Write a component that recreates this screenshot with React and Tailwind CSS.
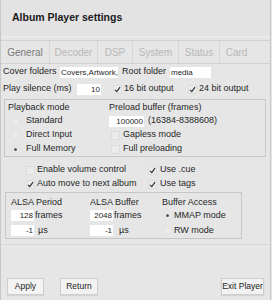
import React from "react";

const Check = ({ checked }) => (
  <span className="w-[9px] h-[9px] shrink-0 border border-[#dddddd] bg-[#ebebeb] flex items-center justify-center">
    {checked && (
      <svg width="7" height="7" viewBox="0 0 7 7">
        <path d="M1 3.8 L2.8 5.6 L6 1.2" fill="none" stroke="#333" strokeWidth="1.2" />
      </svg>
    )}
  </span>
);

const Radio = ({ checked }) => (
  <span className="w-[9px] h-[9px] shrink-0 rounded-full border border-[#e0e0e0] bg-[#ebebeb] flex items-center justify-center">
    {checked && <span className="w-[3px] h-[3px] rounded-full bg-[#555]" />}
  </span>
);

const Field = ({ w, value, right }) => (
  <span
    className={`h-[11px] bg-white text-[8px] leading-[11px] px-[1px] overflow-hidden whitespace-nowrap ${
      right ? "text-right" : "text-left"
    }`}
    style={{ width: w }}
  >
    {value}
  </span>
);

const tabs = [
  { name: "General", w: "w-[49px]", active: true },
  { name: "Decoder", w: "w-[48px]" },
  { name: "DSP", w: "w-[35px]" },
  { name: "System", w: "w-[46px]" },
  { name: "Status", w: "w-[41px]" },
  { name: "Card", w: "w-[33px]" },
];

const Button = ({ children, className }) => (
  <button
    className={`h-[17px] bg-[#f3f3f3] border border-[#cfcfcf] shadow-[0_1px_1px_rgba(0,0,0,0.08)] text-[8.5px] text-[#222] ${className}`}
  >
    {children}
  </button>
);

export default function App() {
  return (
    <div
      className="w-[272px] h-[300px] bg-[#e6e6e6] text-[#262626] text-[9px] overflow-hidden"
      style={{ fontFamily: '"Liberation Sans", Arial, sans-serif' }}
    >
      <div className="w-[271px] h-[300px] border-x border-[#c8c8c8] flex flex-col">
        {/* header */}
        <div className="h-[37px] shrink-0 flex items-center pl-[11px] border-b border-[#ededed] bg-[#e3e3e3]">
          <span className="font-bold text-[10.5px] text-[#1a1a1a]">Album Player settings</span>
        </div>

        {/* tabs */}
        <div className="mt-[3px] h-[24px] shrink-0 flex border-y border-[#d2d2d2]">
          {tabs.map((t, i) => (
            <div
              key={t.name}
              className={`${t.w} flex items-center justify-center text-[10px] ${
                i < tabs.length - 1 ? "border-r border-[#d6d6d6]" : ""
              } ${t.active ? "text-[#7a7a7a]" : "text-[#b8b8b8]"}`}
            >
              {t.name}
            </div>
          ))}
        </div>

        {/* content */}
        <div className="pl-[2px] flex flex-col">
          <div className="h-[16px] flex items-center">
            <span className="w-[57px]">Cover folders</span>
            <Field w="58px" value="Covers,Artwork," />
            <span className="ml-[4px] w-[48px]">Root folder</span>
            <Field w="41px" value="media" />
          </div>

          <div className="mt-[1px] h-[16px] flex items-center">
            <span className="w-[74px]">Play silence (ms)</span>
            <Field w="24px" value="10" right />
            <span className="ml-[12px]">
              <Check checked />
            </span>
            <span className="ml-[2px] w-[64px]">16 bit output</span>
            <Check checked />
            <span className="ml-[2px]">24 bit output</span>
          </div>

          {/* playback box */}
          <div className="mt-[2px] ml-[1px] w-[262px] border border-[#c6c6c6] flex pt-[2px] h-[58px]">
            <div className="w-[104px] pl-[3px] flex flex-col">
              <div className="h-[12px] flex items-center">Playback mode</div>
              {[
                ["Standard", false],
                ["Direct Input", false],
                ["Full Memory", true],
              ].map(([label, on]) => (
                <div key={label} className="h-[14px] flex items-center">
                  <span className="ml-[3px]">
                    <Radio checked={on} />
                  </span>
                  <span className="ml-[6px]">{label}</span>
                </div>
              ))}
            </div>
            <div className="flex flex-col">
              <div className="h-[12px] flex items-center">Preload buffer (frames)</div>
              <div className="h-[14px] flex items-center">
                <Field w="35px" value="100000" right />
                <span className="ml-[4px]">(16384-8388608)</span>
              </div>
              {["Gapless mode", "Full preloading"].map((label) => (
                <div key={label} className="h-[14px] flex items-center">
                  <span className="ml-[2px]">
                    <Check />
                  </span>
                  <span className="ml-[3px]">{label}</span>
                </div>
              ))}
            </div>
          </div>

          {/* options */}
          <div className="mt-[6px] flex">
            <div className="w-[145px] pl-[23px] flex flex-col">
              <div className="h-[14px] flex items-center gap-[2px]">
                <Check />
                <span>Enable volume control</span>
              </div>
              <div className="h-[14px] flex items-center gap-[2px]">
                <Check checked />
                <span>Auto move to next album</span>
              </div>
            </div>
            <div className="flex flex-col">
              <div className="h-[14px] flex items-center gap-[3px]">
                <Check checked />
                <span>Use .cue</span>
              </div>
              <div className="h-[14px] flex items-center gap-[3px]">
                <Check checked />
                <span>Use tags</span>
              </div>
            </div>
          </div>

          {/* ALSA box */}
          <div className="mt-[1px] ml-[2px] w-[237px] h-[47px] border border-[#c6c6c6] pt-[5px] pl-[5px] flex">
            <div className="w-[79px] flex flex-col">
              <div className="h-[10px] flex items-center">ALSA Period</div>
              <div className="h-[15px] flex items-center">
                <Field w="23px" value="128" right />
                <span className="ml-[1px]">frames</span>
              </div>
              <div className="h-[15px] flex items-center">
                <Field w="23px" value="-1" right />
                <span className="ml-[4px]">µs</span>
              </div>
            </div>
            <div className="w-[72px] flex flex-col">
              <div className="h-[10px] flex items-center">ALSA Buffer</div>
              <div className="h-[15px] flex items-center">
                <Field w="23px" value="2048" right />
                <span className="ml-[1px]">frames</span>
              </div>
              <div className="h-[15px] flex items-center">
                <Field w="23px" value="-1" right />
                <span className="ml-[6px]">µs</span>
              </div>
            </div>
            <div className="flex flex-col">
              <div className="h-[10px] flex items-center">Buffer Access</div>
              <div className="h-[15px] flex items-center">
                <span className="ml-[1px]">
                  <Radio checked />
                </span>
                <span className="ml-[2px]">MMAP mode</span>
              </div>
              <div className="h-[15px] flex items-center">
                <span className="ml-[1px]">
                  <Radio />
                </span>
                <span className="ml-[2px]">RW mode</span>
              </div>
            </div>
          </div>
        </div>

        {/* footer */}
        <div className="mt-[5px] flex-1 border-t border-[#d8d8d8] flex items-end pb-[5px]">
          <Button className="ml-[6px] w-[37px]">Apply</Button>
          <Button className="ml-[16px] w-[38px]">Return</Button>
          <Button className="ml-auto mr-[6px] w-[43px]">Exit Player</Button>
        </div>
      </div>
    </div>
  );
}
